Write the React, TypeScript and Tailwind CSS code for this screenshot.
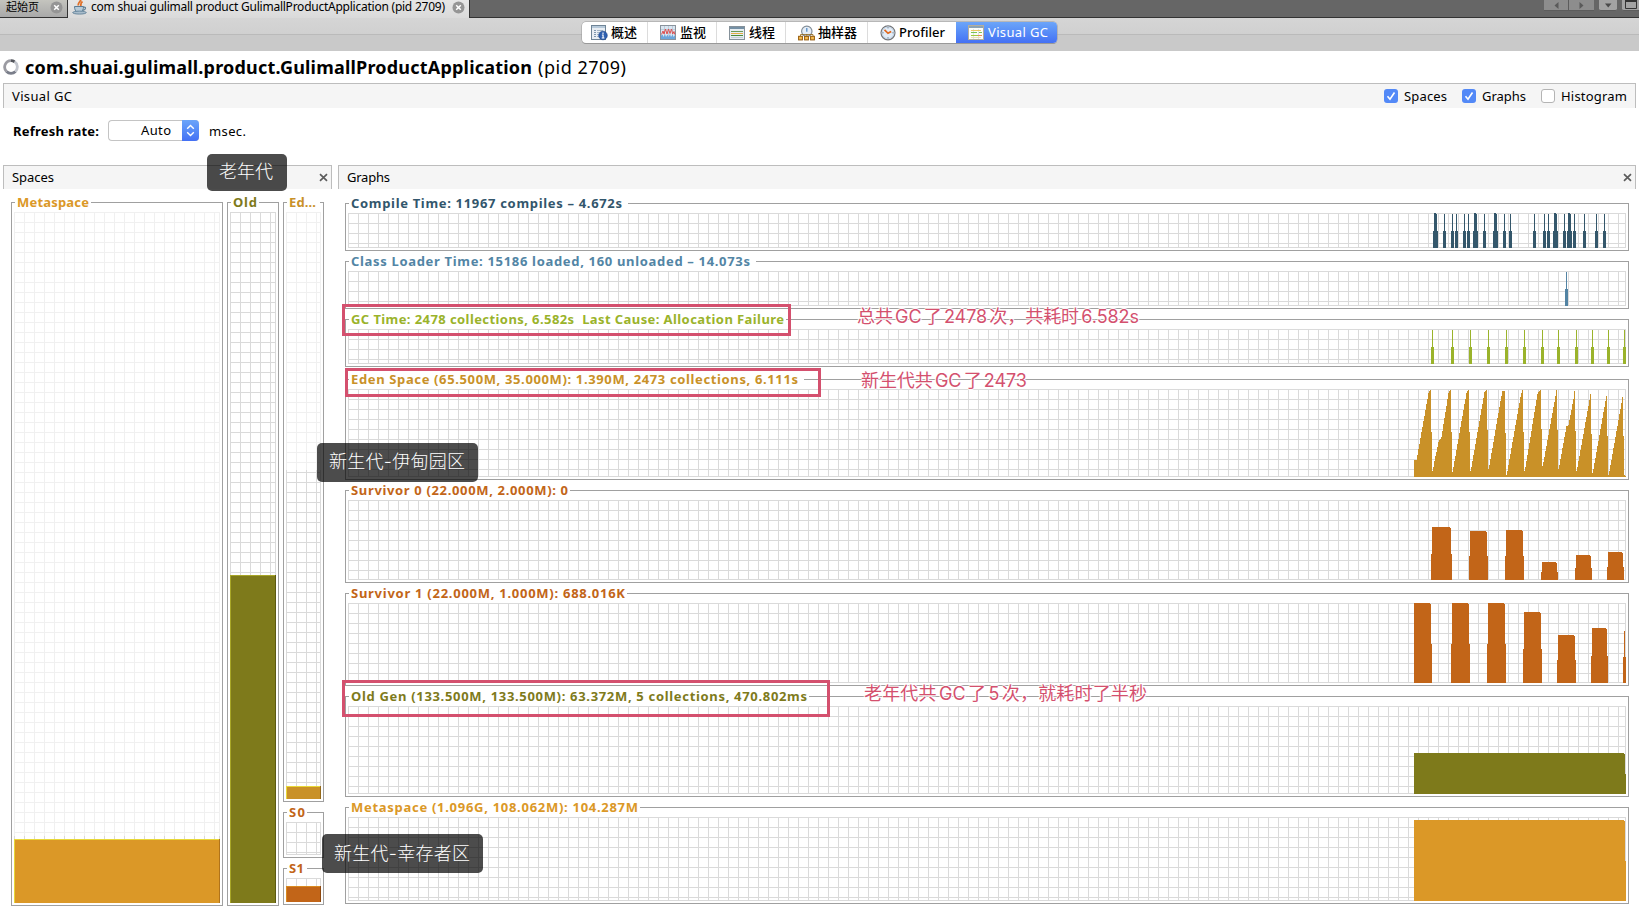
import React, { useLayoutEffect, useRef, useState } from "react";
import clsx from "clsx";

/* Text whose tracking is adjusted so that it spans the given width. */
function Fit({ w, className, children }: { w: number; className?: string; children: string }) {
  const ref = useRef<HTMLSpanElement>(null);
  const [ls, setLs] = useState(0);
  useLayoutEffect(() => {
    const el = ref.current;
    if (!el) return;
    el.style.letterSpacing = "0px";
    const natural = el.getBoundingClientRect().width;
    setLs((w - natural) / Math.max(1, children.length - 1));
  }, [w, children]);
  return (
    <span className="block shrink-0 whitespace-pre" style={{ width: w }}>
      <span ref={ref} className={clsx("inline-block whitespace-pre", className)} style={{ letterSpacing: ls + "px" }}>
        {children}
      </span>
    </span>
  );
}

const DARK = "#dadada";
const LIGHT = "#f0f0f0";

function gridPath(w: number, h: number, from = 0, to = h) {
  let d = "";
  for (let x = 0; x < w - 1; x += 10) d += `M${x} ${from}h1v${to - from}h-1z`;
  d += `M${w - 1} ${from}h1v${to - from}h-1z`;
  for (let y = 0; y < h - 1; y += 10) if (y >= from && y < to) d += `M0 ${y}h${w}v1h-${w}z`;
  if (to === h) d += `M0 ${h - 1}h${w}v1h-${w}z`;
  return d;
}

type Rect = [number, number, number, number];

function Plot({ w, h, rects = [], fill, split = 0, children }: {
  w: number; h: number; rects?: Rect[]; fill?: string; split?: number; children?: React.ReactNode;
}) {
  return (
    <svg width={w} height={h} className="block" shapeRendering="crispEdges">
      {split > 0 && <path d={gridPath(w, h, 0, split)} fill={LIGHT} />}
      <path d={gridPath(w, h, split, h)} fill={DARK} />
      <path d={rects.map(([x, y, a, b]) => `M${x} ${y}h${a}v${b}h-${a}z`).join("")} fill={fill} />
      {children}
    </svg>
  );
}

function Box({ title, titleW, maskW, color, className, children }: {
  title: string; titleW: number; maskW: number; color: string; className: string; children: React.ReactNode;
}) {
  return (
    <section className={clsx("relative border border-[#a0a0a0] bg-white px-[2px] pt-[9px]", className)}>
      <div className="absolute -top-[8px] left-[3px] flex h-[16px] items-center bg-white pl-[2px]" style={{ width: maskW }}>
        <Fit w={titleW} className={clsx("text-[13px] font-bold leading-[16px]", color)}>{title}</Fit>
      </div>
      {children}
    </section>
  );
}

/* ---- chart data, x counted from the first plotted column ---- */
const X0 = 1032;
const GW = 1278;

function spikes(cols: number[]): Rect[] {
  return cols.flatMap((c): Rect[] => [[X0 + c, 1, 1, 34], [X0 + c - 1, 18, 3, 17]]);
}
function doubleSpikes(cols: number[]): Rect[] {
  return cols.flatMap((c): Rect[] => [[X0 + c, 0, 2, 35], [X0 + c + 2, 1, 1, 34], [X0 + c - 1, 18, 5, 17]]);
}
const compileRects = [
  ...spikes([64, 72, 76, 84, 88, 104, 124, 130, 154, 164, 168, 184, 194, 204, 216, 224]),
  ...doubleSpikes([54, 94, 114, 174, 188]),
];
const loaderRects = spikes([186]);
const gcRects = spikes([52, 72, 90, 108, 126, 144, 162, 178, 196, 212, 228, 244]);

const edenPoints: [number, number][] = [
  [34, 71], [36, 71], [37, 66], [48, 4], [49, 2], [50, 1], [51, 43],
  [52, 82], [53, 78], [54, 72], [58, 53], [61, 48], [68, 4], [69, 2], [70, 1], [71, 43],
  [72, 83], [73, 78], [86, 4], [87, 2], [88, 1], [89, 43],
  [90, 82], [91, 78], [104, 3], [105, 2], [106, 1], [107, 41],
  [108, 80], [109, 76], [120, 12], [122, 2], [124, 2], [125, 44],
  [126, 86], [127, 82], [128, 76], [140, 8], [141, 4], [142, 1], [143, 43],
  [144, 82], [145, 78], [157, 5], [158, 3], [159, 2], [160, 1], [161, 40],
  [162, 77], [163, 73], [175, 7], [176, 1], [177, 41],
  [178, 80], [179, 76], [186, 37], [188, 36], [189, 31], [193, 10], [194, 2], [195, 42],
  [196, 82], [197, 78], [209, 11], [210, 5], [211, 45],
  [212, 84], [213, 80], [225, 12], [226, 7], [227, 47],
  [228, 86], [229, 82], [241, 14], [242, 8], [243, 47], [244, 86], [245, 87],
];
const edenRects: Rect[] = [];
edenPoints.forEach(([c, y], i) => {
  const next = edenPoints[i + 1] ?? [c + 1, y];
  for (let k = c; k < next[0]; k++) {
    const v = Math.round(y + ((next[1] - y) * (k - c)) / (next[0] - c));
    edenRects.push([X0 + k, v, 1, 88 - v]);
  }
});

/* left, right, top of bar, top of the wider foot */
function bars(list: [number, number, number, number][], h: number): Rect[] {
  return list.flatMap(([l, r, t, f]): Rect[] => {
    const fl = Math.max(34, l - 1);
    return [
      [X0 + l, t, Math.max(1, r - l - 1), h - t],
      [X0 + r - 1, t + 1, 1, h - t - 1],
      [X0 + fl, f, Math.min(246, r + 1) - fl, h - f],
    ];
  });
}
const s0Rects = bars([[52, 71, 27, 54], [90, 107, 31, 56], [126, 143, 30, 56], [162, 177, 62, 72], [196, 211, 55, 68], [228, 243, 52, 67]], 80);
const s1Rects = bars([[34, 51, 0, 41], [72, 89, 0, 41], [108, 125, 0, 41], [144, 161, 9, 46], [178, 195, 32, 57], [212, 227, 25, 53], [244, 245, 28, 54]], 80);
const oldRects = bars([[34, 245, 47, 68]], 88);
const metaRects = bars([[34, 245, 3, 44]], 84);

const graphs = [
  { t: "Compile Time: 11967 compiles – 4.672s", tw: 271, mw: 279, c: "text-[#32566c]", f: "#34576b", h: 35, r: compileRects, cls: "h-[48px]" },
  { t: "Class Loader Time: 15186 loaded, 160 unloaded – 14.073s", tw: 399, mw: 407, c: "text-[#5285a5]", f: "#5283a3", h: 35, r: loaderRects, cls: "h-[48px] mt-[10px]" },
  { t: "GC Time: 2478 collections, 6.582s  Last Cause: Allocation Failure", tw: 433, mw: 437, c: "text-[#9ab32b]", f: "#9ab32b", h: 35, r: gcRects, cls: "h-[48px] mt-[10px]" },
  { t: "Eden Space (65.500M, 35.000M): 1.390M, 2473 collections, 6.111s", tw: 447, mw: 455, c: "text-[#c99128]", f: "#c99128", h: 88, r: edenRects, cls: "h-[101px] mt-[12px]" },
  { t: "Survivor 0 (22.000M, 2.000M): 0", tw: 217, mw: 221, c: "text-[#c26518]", f: "#c26518", h: 80, r: s0Rects, cls: "h-[93px] mt-[10px]" },
  { t: "Survivor 1 (22.000M, 1.000M): 688.016K", tw: 274, mw: 278, c: "text-[#c26518]", f: "#c26518", h: 80, r: s1Rects, cls: "h-[93px] mt-[10px]" },
  { t: "Old Gen (133.500M, 133.500M): 63.372M, 5 collections, 470.802ms", tw: 456, mw: 460, c: "text-[#7e7a1b]", f: "#7e7a1b", h: 88, r: oldRects, cls: "h-[101px] mt-[10px]" },
  { t: "Metaspace (1.096G, 108.062M): 104.287M", tw: 287, mw: 291, c: "text-[#db9827]", f: "#db9827", h: 84, r: metaRects, cls: "h-[97px] mt-[10px]" },
];

/* Filled portion of a memory space with a highlighted and a shaded edge. */
function Level({ w, h, y, fill, hi, lo }: { w: number; h: number; y: number; fill: string; hi: string; lo: string }) {
  return (
    <g>
      <rect x={0} y={y} width={w} height={h - y} fill={fill} />
      <rect x={0} y={y} width={w} height={1} fill={hi} />
      <rect x={0} y={y} width={1} height={h - y} fill={hi} />
      <rect x={w - 1} y={y} width={1} height={h - y} fill={lo} />
    </g>
  );
}

function TabClose() {
  return (
    <svg width="13" height="13" viewBox="0 0 13 13" className="block shrink-0">
      <circle cx="6.5" cy="6.5" r="6" fill="#959595" />
      <path d="M4.2 4.2l4.6 4.6M8.8 4.2l-4.6 4.6" stroke="#fff" strokeWidth="1.5" />
    </svg>
  );
}

function PanelClose() {
  return (
    <svg width="9" height="9" viewBox="0 0 9 9" className="block shrink-0">
      <path d="M1 1.2l7 6.6M8 1.2l-7 6.6" stroke="#5c5c5c" strokeWidth="1.7" />
    </svg>
  );
}

function JavaIcon() {
  return (
    <svg width="16" height="16" viewBox="0 0 16 16" className="block shrink-0">
      <path d="M8.5 0C10 2 5.200 3.500 6.500 6.500M10.500 2.500C8.500 4 8.500 5 9 7" stroke="#e0702a" strokeWidth="1.8" fill="none" />
      <path d="M2.500 7.500h9c0 3-1 5-2.500 5.500H5.500C3.500 12.500 2.500 10.500 2.500 7.500z" fill="#b9cbd8" stroke="#5b7d96" strokeWidth="1" />
      <path d="M11.500 8.300c2.600-.8 3 2.200-.8 3" stroke="#5b7d96" fill="none" strokeWidth="1.200" />
      <ellipse cx="7.500" cy="13.600" rx="6.800" ry="1.500" fill="#a8bccb" stroke="#557790" strokeWidth=".8" />
    </svg>
  );
}

function OverviewIcon() {
  return (
    <svg width="17" height="16" viewBox="0 0 17 16" className="block shrink-0">
      <rect x=".5" y=".5" width="14" height="14" fill="#e9eef4" stroke="#6f8496" />
      <rect x="1" y="1" width="13" height="2" fill="#b7cadb" />
      <path d="M3 5.500h2M3 7.500h2M3 9.500h2M3 11.500h2" stroke="#7f97ae" />
      <path d="M6 5.500h6M6 7.500h3M6 9.500h2M6 11.500h2" stroke="#a5b6c6" />
      <circle cx="12" cy="10.500" r="4.300" fill="#2e5fb0" stroke="#1d4387" strokeWidth=".6" />
      <path d="M12 7.600v1.400M10.900 10h1.200v3M10.700 13h2.700" stroke="#fff" strokeWidth="1.100" fill="none" />
    </svg>
  );
}

function MonitorIcon() {
  return (
    <svg width="16" height="16" viewBox="0 0 16 16" className="block shrink-0">
      <rect x=".5" y=".5" width="15" height="14" fill="#dbe6f1" stroke="#8a939c" />
      <path d="M4.500 1v13M8.500 1v13M12.500 1v13M1 4.500h14" stroke="#b5c6d6" strokeWidth=".8" />
      <path d="M1 14V10.500l1.500-1 1 2.500 1.500-3 1 3 1.500-2.500 1 2.500 1.500-3 1 3 1.500-2.500 1 2.500 1.500-2v4z" fill="#6ba6dc" />
      <path d="M1.500 9.500L3 6l1 3 1.500-5L7 9l1.500-5L10 8.500 11.500 4l1.200 5L14 6.500l.8 3" stroke="#de5050" strokeWidth="1" fill="none" />
    </svg>
  );
}

function ThreadsIcon() {
  return (
    <svg width="16" height="16" viewBox="0 0 16 16" className="block shrink-0">
      <rect x=".5" y="1.500" width="15" height="13" fill="#e6edf2" stroke="#85919a" />
      <rect x="1" y="2" width="14" height="2" fill="#7590a5" />
      <path d="M2 6.500h12" stroke="#6c9a55" />
      <path d="M2 8.500h12" stroke="#e3ae45" strokeWidth="1.200" />
      <path d="M2 10.500h12" stroke="#4d8a38" />
      <path d="M2 12.500h12" stroke="#c3ced6" />
    </svg>
  );
}

function SamplerIcon() {
  return (
    <svg width="17" height="16" viewBox="0 0 17 16" className="block shrink-0">
      <circle cx="8.800" cy="6.300" r="5.200" fill="#e4edf7" stroke="#828d97" strokeWidth="1.200" />
      <path d="M8.800 3v3.800" stroke="#4c87c4" strokeWidth="1.200" />
      <path d="M2.500 11V9.500h12.500v2M8.800 9v2" stroke="#8e6416" fill="none" strokeWidth=".8" />
      <rect x=".6" y="11.300" width="3.800" height="3.600" fill="#f7bd50" stroke="#94590a" />
      <rect x="6.600" y="11.300" width="3.800" height="3.600" fill="#f7bd50" stroke="#94590a" />
      <rect x="12.600" y="11.300" width="3.800" height="3.600" fill="#f7bd50" stroke="#94590a" />
    </svg>
  );
}

function ProfilerIcon() {
  return (
    <svg width="16" height="16" viewBox="0 0 16 16" className="block shrink-0">
      <circle cx="8" cy="7.800" r="7" fill="#e2ecf7" stroke="#76777a" strokeWidth="1.200" />
      <circle cx="8" cy="7.800" r="5.800" fill="none" stroke="#bdd0e3" strokeWidth=".8" />
      <path d="M8 2.200v1.200M8 12.200v1.200M2.400 7.800h1.200M12.400 7.800h1.200" stroke="#6c7c8c" />
      <path d="M4.500 4.800L8 8.300l3.200-1.900" stroke="#e2691e" strokeWidth="1.700" fill="none" />
    </svg>
  );
}

function VisualGcIcon() {
  return (
    <svg width="16" height="16" viewBox="0 0 16 16" className="block shrink-0">
      <rect x=".5" y=".5" width="15" height="14" fill="#fdfdf8" stroke="#b5ae9c" />
      <rect x="1" y="1" width="14" height="2" fill="#8ca3b5" />
      <path d="M5.500 4v10M10.500 4v10" stroke="#dde3e7" />
      <path d="M3 5.500h10" stroke="#ecca68" />
      <path d="M3 7.500h6M11 7.500h3" stroke="#7cc455" />
      <path d="M3 10.500h7" stroke="#9dc93d" strokeWidth="1.200" />
      <path d="M10 10.500h4" stroke="#ea8a52" strokeWidth="1.200" />
      <path d="M3 12.500h10" stroke="#eadfb8" />
    </svg>
  );
}

const views = [
  { Icon: OverviewIcon, t: "概述", tw: 26, cls: "w-[66px] pl-[9px] border-r", gap: "gap-[3px]" },
  { Icon: MonitorIcon, t: "监视", tw: 26, cls: "w-[69px] pl-[12px] border-r", gap: "gap-[4px]" },
  { Icon: ThreadsIcon, t: "线程", tw: 26, cls: "w-[69px] pl-[12px] border-r", gap: "gap-[4px]" },
  { Icon: SamplerIcon, t: "抽样器", tw: 39, cls: "w-[82px] pl-[12px] border-r", gap: "gap-[3px]" },
  { Icon: ProfilerIcon, t: "Profiler", tw: 46, cls: "w-[88px] pl-[12px]", gap: "gap-[3px]" },
];

function Check({ on }: { on: boolean }) {
  return (
    <span className={clsx("flex size-[14px] shrink-0 items-center justify-center rounded-[3px]", on ? "bg-[#5389f7]" : "border border-[#b4b4b4] bg-white")}>
      {on && (
        <svg width="10" height="10" viewBox="0 0 10 10" className="block">
          <path d="M1.500 5.200l2.500 3L8.500 1.500" stroke="#fff" strokeWidth="1.600" fill="none" />
        </svg>
      )}
    </span>
  );
}

function Note({ w, className, children }: { w: number; className: string; children: string }) {
  return (
    <div className={clsx("absolute flex h-[24px] items-center", className)}>
      <Fit w={w} className="font-['Inter','Noto_Sans_CJK_SC',sans-serif] text-[18px] leading-[24px] text-[#d4506e] [text-autospace:normal] [text-shadow:0_0_1px_#fff,0_0_2px_#fff,1px_0_1px_#fff,-1px_0_1px_#fff,0_1px_1px_#fff,0_-1px_1px_#fff]">
        {children}
      </Fit>
    </div>
  );
}

function Badge({ w, className, children }: { w: number; className: string; children: string }) {
  return (
    <div className={clsx("absolute flex items-center rounded-[5px] bg-black/70 pl-[12px]", className)}>
      <Fit w={w} className="font-['Inter','Noto_Sans_CJK_SC',sans-serif] text-[18px] leading-[24px] font-light text-white">{children}</Fit>
    </div>
  );
}

export default function App() {
  return (
    <div className="relative flex h-[917px] w-[1639px] flex-col overflow-hidden bg-white font-['Noto_Sans','Noto_Sans_CJK_SC',sans-serif] text-[13px] text-black">
      {/* document tabs */}
      <header className="flex h-[18px] shrink-0 bg-[#666]">
        <div className="flex w-[68px] items-center gap-[11px] border-r border-b border-[#333] bg-gradient-to-b from-[#c4c4be] to-[#a9a9a9] pb-[3px] pl-[6px]">
          <Fit w={33} className="text-[11px] leading-[14px]">起始页</Fit>
          <TabClose />
        </div>
        <div className="flex w-[401px] items-center bg-gradient-to-b from-[#e6e6e6] to-[#dadada] pb-[4px] pl-[4px]">
          <JavaIcon />
          <div className="w-[3px]" />
          <Fit w={354} className="text-[12px] leading-[14px]">com shuai gulimall product GulimallProductApplication (pid 2709)</Fit>
          <div className="w-[7px]" />
          <TabClose />
        </div>
        <div className="flex flex-1 items-start justify-end border-b border-l border-[#333]">
          <div className="flex h-[11px] w-[25px] items-center justify-center border-r border-b border-[#5c5c5c] bg-[#8d8d8d]">
            <svg width="5" height="7" viewBox="0 0 5 7"><path d="M4.500 0v7L.5 3.500z" fill="#5a5a5a" /></svg>
          </div>
          <div className="flex h-[11px] w-[25px] items-center justify-center border-b border-[#5c5c5c] bg-[#8d8d8d]">
            <svg width="5" height="7" viewBox="0 0 5 7"><path d="M.5 0v7l4-3.500z" fill="#5a5a5a" /></svg>
          </div>
          <div className="ml-[5px] flex h-[11px] w-[18px] items-center justify-center rounded-b-[2px] border-b border-[#5c5c5c] bg-[#a3a3a3]">
            <svg width="7" height="5" viewBox="0 0 7 5"><path d="M0 .5h6.500L3.200 4.500z" fill="#4a4a4a" /></svg>
          </div>
          <div className="ml-[5px] flex h-[11px] w-[17px] items-start rounded-bl-[2px] border-b border-[#5c5c5c] bg-[#a3a3a3] pl-[3px]">
            <svg width="12" height="9" viewBox="0 0 12 9"><path d="M.5 0v8.500h11V0" fill="none" stroke="#333" /><path d="M0 1h12" stroke="#333" strokeWidth="2" /></svg>
          </div>
        </div>
      </header>

      {/* view switcher */}
      <nav className="flex h-[33px] shrink-0 justify-center bg-[linear-gradient(#d5d5d5_0,#d0d0d0_16px,#bababa_16px,#bababa_17px,#c9c9c9_17px)] pt-[4px]">
        <div className="flex h-[21px] overflow-hidden rounded-[4px] bg-white shadow-[0_0_0_0.5px_#9a9a9a,0_1px_0_#999]">
          {views.map(({ Icon, t, tw, cls, gap }) => (
            <div key={t} className={clsx("flex items-center border-[#dcdcdc]", cls, gap)}>
              <Icon />
              <Fit w={tw} className="text-[13px] leading-[20px] font-medium">{t}</Fit>
            </div>
          ))}
          <div className="flex w-[101px] items-center gap-[4px] bg-gradient-to-b from-[#6ca5f9] to-[#4470f4] pl-[12px]">
            <VisualGcIcon />
            <Fit w={60} className="text-[13px] leading-[20px] text-white">Visual GC</Fit>
          </div>
        </div>
      </nav>

      {/* application title */}
      <div className="flex h-[32px] shrink-0 items-center pl-[3px]">
        <svg width="16" height="16" viewBox="0 0 16 16" className="block shrink-0">
          <path d="M8 1.700A6.300 6.300 0 0 0 3.500 12.400" fill="none" stroke="#9b9ba2" strokeWidth="2.800" />
          <path d="M3.500 12.400A6.300 6.300 0 0 0 12.500 12.400" fill="none" stroke="#7a7e8a" strokeWidth="2.800" />
          <path d="M12.500 12.400A6.300 6.300 0 0 0 11.500 2.700" fill="none" stroke="#c2c5cd" strokeWidth="2.800" />
          <path d="M11.500 2.700A6.300 6.300 0 0 0 8 1.700" fill="none" stroke="#54565d" strokeWidth="2.800" />
        </svg>
        <div className="w-[6px]" />
        <Fit w={507} className="text-[18px] leading-[28px] font-bold">com.shuai.gulimall.product.GulimallProductApplication</Fit>
        <div className="w-[6px]" />
        <Fit w={88} className="text-[18px] leading-[28px]">(pid 2709)</Fit>
      </div>

      {/* Visual GC bar */}
      <div className="mr-[3px] ml-[3px] flex h-[25px] shrink-0 items-center border-x border-t border-[#bdbdbd] bg-[#f5f5f5] pr-[8px] pl-[8px]">
        <Fit w={60} className="text-[13px] leading-[20px]">Visual GC</Fit>
        <div className="flex-1" />
        <Check on />
        <div className="w-[6px]" />
        <Fit w={43} className="text-[13px] leading-[20px]">Spaces</Fit>
        <div className="w-[15px]" />
        <Check on />
        <div className="w-[6px]" />
        <Fit w={44} className="text-[13px] leading-[20px]">Graphs</Fit>
        <div className="w-[15px]" />
        <Check on={false} />
        <div className="w-[6px]" />
        <Fit w={66} className="text-[13px] leading-[20px]">Histogram</Fit>
      </div>

      {/* refresh rate */}
      <div className="flex h-[57px] shrink-0 items-start pt-[12px] pl-[13px]">
        <div className="flex h-[21px] items-center">
          <Fit w={86} className="mt-[2px] text-[13px] leading-[20px] font-bold">Refresh rate:</Fit>
          <div className="ml-[9px] flex h-[21px] w-[91px] items-center rounded-[4px] border border-r-0 border-[#c4c4c4] bg-white pl-[32px]">
            <Fit w={30} className="text-[13px] leading-[18px]">Auto</Fit>
            <div className="ml-auto flex h-[21px] w-[17px] items-center justify-center rounded-r-[4px] bg-gradient-to-b from-[#6ca5f9] to-[#4470f4]">
              <svg width="9" height="13" viewBox="0 0 9 13">
                <path d="M1.200 4.800l3.300-3.300 3.300 3.300M1.200 8.200l3.300 3.300 3.300-3.300" stroke="#fff" strokeWidth="1.400" fill="none" />
              </svg>
            </div>
          </div>
          <div className="w-[10px]" />
          <Fit w={37} className="mt-[2px] text-[13px] leading-[20px]">msec.</Fit>
        </div>
      </div>

      <main className="flex gap-[6px] pl-[3px]">
        {/* Spaces */}
        <div className="w-[329px] shrink-0">
          <div className="flex h-[24px] items-center justify-between border-x border-t border-[#bdbdbd] bg-[#f5f5f5] pr-[3px] pl-[8px]">
            <Fit w={42} className="text-[13px] leading-[20px]">Spaces</Fit>
            <PanelClose />
          </div>
          <div className="flex pt-[13px] pl-[8px]">
            <Box title="Metaspace" titleW={72} maskW={76} color="text-[#db9827]" className="h-[704px] w-[212px]">
              <Plot w={206} h={691} split={624}>
                <Level w={206} h={691} y={627} fill="#db9827" hi="#e8d838" lo="#b0731a" />
              </Plot>
            </Box>
            <Box title="Old" titleW={24} maskW={28} color="text-[#7e7a1b]" className="ml-[4px] h-[704px] w-[52px]">
              <Plot w={46} h={691}>
                <Level w={46} h={691} y={363} fill="#7e7a1b" hi="#a8a628" lo="#5c5912" />
              </Plot>
            </Box>
            <div className="ml-[4px] flex flex-col">
              <Box title="Ed..." titleW={27} maskW={33} color="text-[#c99128]" className="h-[600px] w-[41px]">
                <Plot w={35} h={587} split={258}>
                  <Level w={35} h={587} y={574} fill="#c99128" hi="#e8d838" lo="#94691a" />
                </Plot>
              </Box>
              <Box title="S0" titleW={16} maskW={20} color="text-[#c26518]" className="mt-[10px] h-[46px] w-[41px]">
                <Plot w={35} h={33} />
              </Box>
              <Box title="S1" titleW={15} maskW={20} color="text-[#c26518]" className="mt-[10px] h-[37px] w-[41px]">
                <Plot w={35} h={24}>
                  <Level w={35} h={24} y={8} fill="#c26518" hi="#d98a20" lo="#8d480f" />
                </Plot>
              </Box>
            </div>
          </div>
        </div>

        {/* Graphs */}
        <div className="w-[1298px] shrink-0">
          <div className="flex h-[24px] items-center justify-between border-x border-t border-[#bdbdbd] bg-[#f5f5f5] pr-[3px] pl-[8px]">
            <Fit w={43} className="text-[13px] leading-[20px]">Graphs</Fit>
            <PanelClose />
          </div>
          <div className="flex flex-col pt-[14px] pl-[7px]">
            {graphs.map((g) => (
              <Box key={g.t} title={g.t} titleW={g.tw} maskW={g.mw} color={g.c} className={clsx("w-[1284px]", g.cls)}>
                <Plot w={GW} h={g.h} rects={g.r} fill={g.f} />
              </Box>
            ))}
          </div>
        </div>
      </main>

      {/* annotations laid over the window */}
      <div className="absolute top-[304px] left-[342px] h-[32px] w-[449px] border-3 border-[#d4506e]" />
      <div className="absolute top-[368px] left-[345px] h-[29px] w-[476px] border-3 border-[#d4506e]" />
      <div className="absolute top-[680px] left-[342px] h-[37px] w-[488px] border-3 border-[#d4506e]" />
      <Note w={282} className="top-[305px] left-[857px]">总共GC了2478次，共耗时6.582s</Note>
      <Note w={166} className="top-[369px] left-[861px]">新生代共GC了2473</Note>
      <Note w={283} className="top-[682px] left-[864px]">老年代共GC了5次，就耗时了半秒</Note>
      <Badge w={54} className="top-[154px] left-[207px] h-[37px] w-[80px] pb-[2px]">老年代</Badge>
      <Badge w={136} className="top-[443px] left-[317px] h-[39px] w-[161px] pb-[1px]">新生代-伊甸园区</Badge>
      <Badge w={136} className="top-[834px] left-[322px] h-[39px] w-[161px]">新生代-幸存者区</Badge>
    </div>
  );
}
